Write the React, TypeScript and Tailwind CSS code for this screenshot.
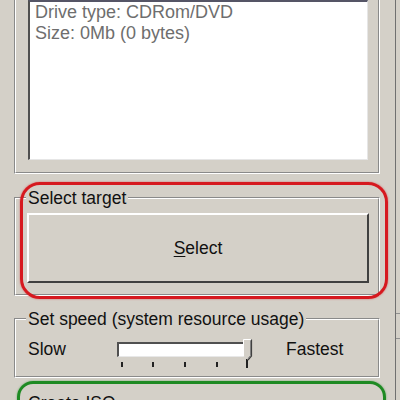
import type { ReactNode } from 'react';

const font = { fontFamily: '"Liberation Sans", Arial, sans-serif' };

// classic win32 etched group box: gray line outside, white line inside
function GroupBox({ label, className = '', innerClass = '', bodyClass = '', children }: { label?: string; className?: string; innerClass?: string; bodyClass?: string; children?: ReactNode }) {
  return (
    <div className={`border border-t-[#8a8a8a] border-l-[#8a8a8a] border-r-white border-b-white ${className}`}>
      <div className={`border border-t-white border-l-white border-r-[#8a8a8a] border-b-[#8a8a8a] ${innerClass}`}>
        {label && (
          <div className="-mt-[11px] ml-[10px] w-fit bg-[#d4d0c8] px-[2px] text-[17.5px] leading-[20px] text-[#111]">
            {label}
          </div>
        )}
        <div className={bodyClass}>{children}</div>
      </div>
    </div>
  );
}

function Thumb() {
  return (
    <svg width="10" height="22" viewBox="0 0 10 22" className="block">
      <path d="M0.5 0.5 H8.5 V17 L5 21 L0.5 17 Z" fill="#d4d0c8" />
      <path d="M0.5 17 V0.5 H8" fill="none" stroke="#ffffff" strokeWidth="1" />
      <path d="M8.5 0.5 V17 L5 21" fill="none" stroke="#404040" strokeWidth="1.2" />
      <path d="M7.5 1.5 V16.5 L5 19.5" fill="none" stroke="#808080" strokeWidth="1" />
    </svg>
  );
}

function Slider() {
  const ticks = [0, 31, 63, 95, 125];
  return (
    <div className="relative w-[136px] h-[32px] mt-[1px]">
      <div className="mt-[2px] h-[15px] w-[134px] border-t-2 border-l-2 border-t-[#505050] border-l-[#505050] border-b border-r border-b-[#e8e8e8] border-r-[#e8e8e8] bg-white" />
      <div className="relative mt-[5px] h-[8px]">
        {ticks.map((t, i) => (
          <div
            key={t}
            className={i === ticks.length - 1 ? 'absolute top-[-3px] w-[2px] h-[9px] bg-[#222]' : 'absolute top-0 w-[2px] h-[5px] bg-[#222]'}
            style={{ left: t + 4 }}
          />
        ))}
      </div>
      <div className="absolute left-[126px] top-[-1px]">
        <Thumb />
      </div>
    </div>
  );
}

export default function App() {
  return (
    <div className="relative flex w-[400px] h-[400px] overflow-hidden bg-[#d4d0c8]" style={font}>
      <div className="w-[395px] shrink-0">
        {/* drive info */}
        <GroupBox className="ml-[14px] w-[366px] border-t-0" innerClass="border-t-0" bodyClass="pl-[12px] pb-[12px]">
          <div className="w-[340px] h-[160px] border-t-2 border-l-2 border-t-[#555566] border-l-[#505050] border-b border-r border-b-[#e6e6e6] border-r-[#e6e6e6] bg-white pl-[5px] text-[18px] leading-[21px] text-[#6e6e6e]">
            <div>Drive type: CDRom/DVD</div>
            <div>Size: 0Mb (0 bytes)</div>
          </div>
        </GroupBox>

        {/* target */}
        <GroupBox label="Select target" className="ml-[14px] mt-[23px] w-[366px]" bodyClass="pl-[11px] pb-[11px]">
          <button
            type="button"
            className="mt-[5px] flex h-[70px] w-[342px] items-center justify-center border-t-2 border-l-2 border-t-white border-l-white border-b-2 border-r-2 border-b-[#404040] border-r-[#404040] bg-[#d4d0c8] text-[17.5px] text-[#111]"
          >
            <span><span className="underline underline-offset-2">S</span>elect</span>
          </button>
        </GroupBox>

        {/* speed */}
        <GroupBox label="Set speed (system resource usage)" className="ml-[14px] mt-[22px] w-[366px]" bodyClass="pl-[12px] pb-[4px]">
          <div className="mt-[10px] flex items-start text-[17.5px] leading-[20px] text-[#111]">
            <div className="w-[89px]">Slow</div>
            <Slider />
            <div className="ml-[33px]">Fastest</div>
          </div>
        </GroupBox>

        {/* iso */}
        <GroupBox label="Create ISO" className="ml-[14px] mt-[24px] w-[366px]" bodyClass="h-[40px]" />
      </div>
      <div className="w-[1px] shrink-0 bg-[#707070]" />
      <div className="flex-1 flex flex-col">
        <div className="h-[313px]" />
        <div className="h-[1px] bg-[#909090]" />
        <div className="h-[24px]" />
        <div className="h-[1px] bg-[#909090]" />
      </div>

      {/* annotations drawn over the screenshot */}
      <div className="pointer-events-none absolute left-[20px] top-[182px] w-[368px] h-[117px] rounded-[20px] border-[3px] border-[#d6191f] shadow-[0_0_2px_rgba(214,25,31,0.6)]" />
      <div className="pointer-events-none absolute left-[17px] top-[381px] w-[369px] h-[60px] rounded-[16px] border-[3px] border-[#1e8a23] shadow-[0_0_2px_rgba(30,138,35,0.6)]" />
    </div>
  );
}
